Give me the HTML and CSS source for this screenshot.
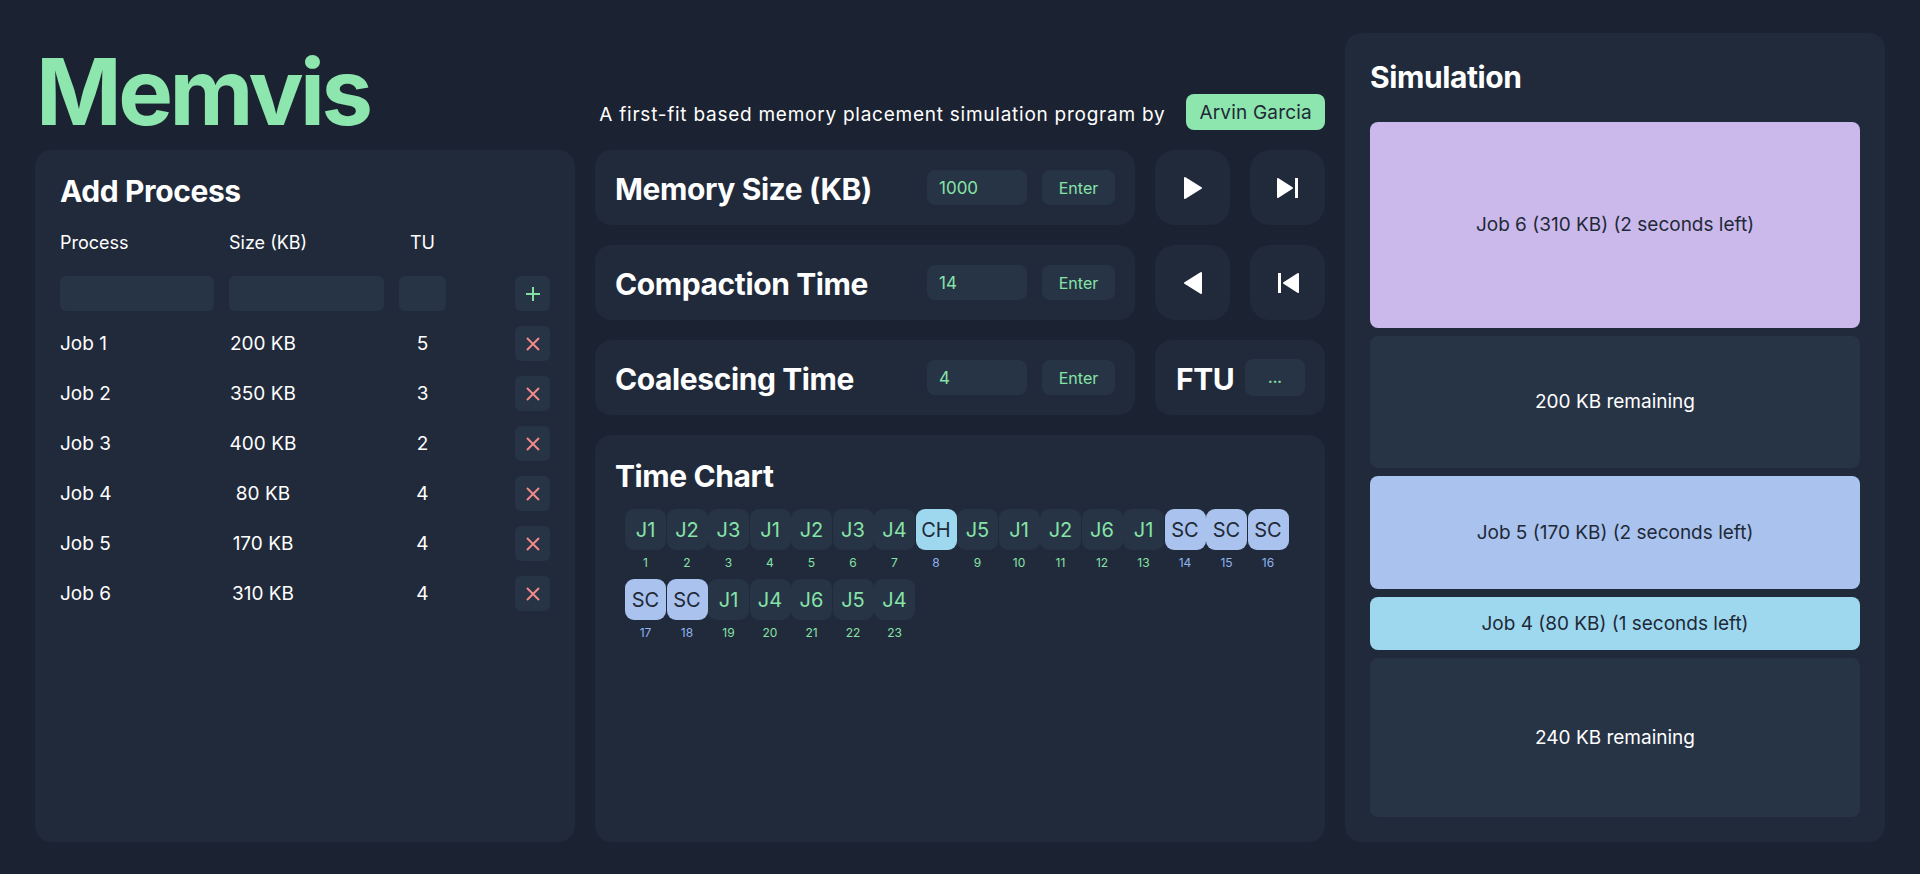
FILE: index.html
```html
<!DOCTYPE html>
<html lang="en">
<head>
<meta charset="utf-8">
<title>Memvis</title>
<link rel="stylesheet" href="styles.css">
</head>
<body>
<div class="app">
  <h1 class="logo">Memvis</h1>

  <div class="byline">
    <span class="byline-text">A first-fit based memory placement simulation program by</span>
    <span class="author">Arvin Garcia</span>
  </div>

  <section class="sim panel">
    <h2 class="panel-title">Simulation</h2>
    <div class="blocks">
      <div class="block lilac" style="flex-grow:310">Job 6 (310 KB) (2 seconds left)</div>
      <div class="block free" style="flex-grow:200">200 KB remaining</div>
      <div class="block periwinkle" style="flex-grow:170">Job 5 (170 KB) (2 seconds left)</div>
      <div class="block sky" style="flex-grow:80">Job 4 (80 KB) (1 seconds left)</div>
      <div class="block free" style="flex-grow:240">240 KB remaining</div>
    </div>
  </section>

  <section class="add panel">
    <h2 class="panel-title add-title">Add Process</h2>
    <div class="trow thead">
      <span>Process</span>
      <span>Size (KB)</span>
      <span class="tu">TU</span>
      <span></span>
    </div>
    <div class="trow tinputs">
      <span class="field"></span>
      <span class="field"></span>
      <span class="field"></span>
      <button class="sq-btn"><svg width="16" height="16" viewBox="0 0 16 16"><path d="M8 1v14M1 8h14" stroke="#7fe0a2" stroke-width="2" fill="none"/></svg></button>
    </div>
    <div class="trow job"><span>Job 1</span><span class="size"><span>200 KB</span></span><span class="tu">5</span><button class="sq-btn"><svg class="x" viewBox="0 0 14 14"><path d="M1 1l12 12M13 1L1 13"/></svg></button></div>
    <div class="trow job"><span>Job 2</span><span class="size"><span>350 KB</span></span><span class="tu">3</span><button class="sq-btn"><svg class="x" viewBox="0 0 14 14"><path d="M1 1l12 12M13 1L1 13"/></svg></button></div>
    <div class="trow job"><span>Job 3</span><span class="size"><span>400 KB</span></span><span class="tu">2</span><button class="sq-btn"><svg class="x" viewBox="0 0 14 14"><path d="M1 1l12 12M13 1L1 13"/></svg></button></div>
    <div class="trow job"><span>Job 4</span><span class="size"><span>80 KB</span></span><span class="tu">4</span><button class="sq-btn"><svg class="x" viewBox="0 0 14 14"><path d="M1 1l12 12M13 1L1 13"/></svg></button></div>
    <div class="trow job"><span>Job 5</span><span class="size"><span>170 KB</span></span><span class="tu">4</span><button class="sq-btn"><svg class="x" viewBox="0 0 14 14"><path d="M1 1l12 12M13 1L1 13"/></svg></button></div>
    <div class="trow job"><span>Job 6</span><span class="size"><span>310 KB</span></span><span class="tu">4</span><button class="sq-btn"><svg class="x" viewBox="0 0 14 14"><path d="M1 1l12 12M13 1L1 13"/></svg></button></div>
  </section>

  <section class="controls">
    <div class="card setting">
      <h2 class="setting-title">Memory Size (KB)</h2>
      <span class="value">1000</span>
      <button class="enter">Enter</button>
    </div>
    <button class="card icon-btn" aria-label="play">
      <svg width="20" height="24" viewBox="0 0 20 24"><path d="M2 2 L18 12 L2 22 Z" fill="#fff" stroke="#fff" stroke-width="2" stroke-linejoin="round"/></svg>
    </button>
    <button class="card icon-btn" aria-label="next">
      <svg width="24" height="22" viewBox="0 0 24 22"><path d="M2 2 L16 11 L2 20 Z" fill="#fff" stroke="#fff" stroke-width="2" stroke-linejoin="round"/><rect x="19" y="1" width="3" height="20" fill="#fff"/></svg>
    </button>

    <div class="card setting">
      <h2 class="setting-title">Compaction Time</h2>
      <span class="value">14</span>
      <button class="enter">Enter</button>
    </div>
    <button class="card icon-btn" aria-label="back">
      <svg width="20" height="24" viewBox="0 0 20 24"><path d="M18 2 L2 12 L18 22 Z" fill="#fff" stroke="#fff" stroke-width="2" stroke-linejoin="round"/></svg>
    </button>
    <button class="card icon-btn" aria-label="first">
      <svg width="24" height="22" viewBox="0 0 24 22"><rect x="2" y="1" width="3" height="20" fill="#fff"/><path d="M22 2 L8 11 L22 20 Z" fill="#fff" stroke="#fff" stroke-width="2" stroke-linejoin="round"/></svg>
    </button>

    <div class="card setting">
      <h2 class="setting-title">Coalescing Time</h2>
      <span class="value">4</span>
      <button class="enter">Enter</button>
    </div>
    <div class="card ftu">
      <h2 class="setting-title">FTU</h2>
      <button class="dots">...</button>
    </div>

    <div class="card chart">
      <h2 class="panel-title">Time Chart</h2>
      <div class="chips">
        <div class="unit"><span class="chip">J1</span><span class="num">1</span></div>
        <div class="unit"><span class="chip">J2</span><span class="num">2</span></div>
        <div class="unit"><span class="chip">J3</span><span class="num">3</span></div>
        <div class="unit"><span class="chip">J1</span><span class="num">4</span></div>
        <div class="unit"><span class="chip">J2</span><span class="num">5</span></div>
        <div class="unit"><span class="chip">J3</span><span class="num">6</span></div>
        <div class="unit"><span class="chip">J4</span><span class="num">7</span></div>
        <div class="unit ch"><span class="chip">CH</span><span class="num">8</span></div>
        <div class="unit"><span class="chip">J5</span><span class="num">9</span></div>
        <div class="unit"><span class="chip">J1</span><span class="num">10</span></div>
        <div class="unit"><span class="chip">J2</span><span class="num">11</span></div>
        <div class="unit"><span class="chip">J6</span><span class="num">12</span></div>
        <div class="unit"><span class="chip">J1</span><span class="num">13</span></div>
        <div class="unit sc"><span class="chip">SC</span><span class="num">14</span></div>
        <div class="unit sc"><span class="chip">SC</span><span class="num">15</span></div>
        <div class="unit sc"><span class="chip">SC</span><span class="num">16</span></div>
        <div class="unit sc"><span class="chip">SC</span><span class="num">17</span></div>
        <div class="unit sc"><span class="chip">SC</span><span class="num">18</span></div>
        <div class="unit"><span class="chip">J1</span><span class="num">19</span></div>
        <div class="unit"><span class="chip">J4</span><span class="num">20</span></div>
        <div class="unit"><span class="chip">J6</span><span class="num">21</span></div>
        <div class="unit"><span class="chip">J5</span><span class="num">22</span></div>
        <div class="unit"><span class="chip">J4</span><span class="num">23</span></div>
      </div>
    </div>
  </section>
</div>
</body>
</html>
```

FILE: styles.css
```css
* { box-sizing: border-box; }

html, body {
  margin: 0;
  background: #1b2231;
  color: #ffffff;
  font-family: Inter, "Noto Sans", "Liberation Sans", sans-serif;
}

button {
  font-family: inherit;
  border: none;
  cursor: pointer;
  padding: 0;
}

.app {
  height: 874px;
  padding: 33px 35px 32px;
  display: grid;
  grid-template-columns: 540px 730px 540px;
  grid-template-rows: 97px 1fr;
  column-gap: 20px;
  row-gap: 20px;
}

.logo {
  grid-column: 1;
  grid-row: 1;
  margin: 13px 0 0 1px;
  font-size: 92px;
  line-height: 1;
  font-weight: 700;
  letter-spacing: -3.5px;
  color: #8de6ad;
}

.byline {
  grid-column: 2;
  grid-row: 1;
  display: flex;
  justify-content: flex-end;
  align-items: flex-end;
  gap: 21px;
}

.byline-text {
  font-size: 19px;
  line-height: 28px;
  letter-spacing: 0.75px;
  margin-bottom: 1px;
}

.author {
  height: 36px;
  padding: 0 13px;
  display: flex;
  align-items: center;
  border-radius: 8px;
  background: #8de6ad;
  color: #1f2937;
  font-size: 19px;
  letter-spacing: 0.2px;
}

.panel {
  background: #212a3b;
  border-radius: 16px;
}

.panel-title {
  margin: 2px 0 0;
  font-size: 30px;
  line-height: 36px;
  font-weight: 700;
  letter-spacing: -0.4px;
}

/* Add process panel */
.add {
  grid-column: 1;
  grid-row: 2;
  padding: 21px 25px;
  display: flex;
  flex-direction: column;
  gap: 15px;
}

.add-title { margin-bottom: 6px; }

.trow {
  display: grid;
  grid-template-columns: 154px 155px 47px 1fr;
  column-gap: 15px;
  align-items: center;
}

.thead {
  font-size: 18px;
  line-height: 24px;
  margin-bottom: 6px;
  padding-top: 1px;
}

.tu { text-align: center; }

.field {
  height: 35px;
  border-radius: 6px;
  background: #273446;
}

.job {
  font-size: 19px;
  height: 35px;
}

.size span {
  display: inline-block;
  width: 68px;
  text-align: center;
}

.sq-btn {
  justify-self: end;
  width: 35px;
  height: 35px;
  border-radius: 6px;
  background: #273446;
  display: flex;
  align-items: center;
  justify-content: center;
}

.x {
  width: 14px;
  height: 14px;
  stroke: #f08a8a;
  stroke-width: 2;
  fill: none;
}

/* Controls */
.controls {
  grid-column: 2;
  grid-row: 2;
  display: grid;
  grid-template-columns: 540px 75px 75px;
  grid-template-rows: 75px 75px 75px 1fr;
  gap: 20px;
}

.card {
  background: #212a3b;
  border-radius: 16px;
}

.setting {
  display: flex;
  align-items: center;
  padding: 0 20px;
  gap: 15px;
}

.setting-title {
  flex: 1;
  margin: 0;
  padding-top: 3px;
  font-size: 30px;
  line-height: 36px;
  font-weight: 700;
  letter-spacing: -0.4px;
}

.value {
  width: 100px;
  height: 35px;
  border-radius: 8px;
  background: #273446;
  color: #86e3a6;
  font-size: 17px;
  line-height: 35px;
  padding-left: 12px;
  padding-top: 1px;
}

.enter {
  width: 73px;
  height: 35px;
  border-radius: 8px;
  background: #273446;
  color: #86e3a6;
  font-size: 16px;
}

.icon-btn {
  border-radius: 20px;
  display: flex;
  align-items: center;
  justify-content: center;
}

.ftu {
  grid-column: 2 / span 2;
  display: flex;
  align-items: center;
  padding: 0 20px 0 21px;
}

.dots {
  width: 60px;
  height: 37px;
  border-radius: 8px;
  background: #273446;
  color: #86e3a6;
  font-size: 14px;
  font-weight: 700;
}

.chart {
  grid-column: 1 / span 3;
  padding: 21px 20px;
}

.chips {
  margin-top: 15px;
  padding-left: 10px;
  display: flex;
  flex-wrap: wrap;
}

.unit {
  width: 41.5px;
  display: flex;
  flex-direction: column;
  align-items: flex-start;
}

.chip {
  width: 41px;
  height: 41px;
  border-radius: 9px;
  background: #273446;
  color: #86e3a6;
  font-size: 20px;
  display: flex;
  align-items: center;
  justify-content: center;
}

.num {
  width: 41px;
  text-align: center;
  font-size: 12px;
  line-height: 16px;
  margin: 5px 0 8px;
  color: #86e3a6;
}

.ch .chip { background: #9ed8ef; color: #1f2937; }
.sc .chip { background: #a9c2ee; color: #1f2937; }
.ch .num, .sc .num { color: #8fb3f0; }

/* Simulation */
.sim {
  grid-column: 3;
  grid-row: 1 / span 2;
  padding: 26px 25px 25px;
  display: flex;
  flex-direction: column;
}

.sim .panel-title { margin: 0; }

.blocks {
  margin-top: 27px;
  flex: 1;
  display: flex;
  flex-direction: column;
  gap: 8px;
}

.block {
  flex-basis: 0;
  flex-shrink: 1;
  min-height: 0;
  border-radius: 8px;
  display: flex;
  align-items: center;
  justify-content: center;
  font-size: 19px;
  color: #1f2937;
}

.lilac { background: #cbb9ec; }
.periwinkle { background: #a9c2ee; }
.sky { background: #9ed8ef; }
.free { background: #273446; color: #ffffff; }
```
